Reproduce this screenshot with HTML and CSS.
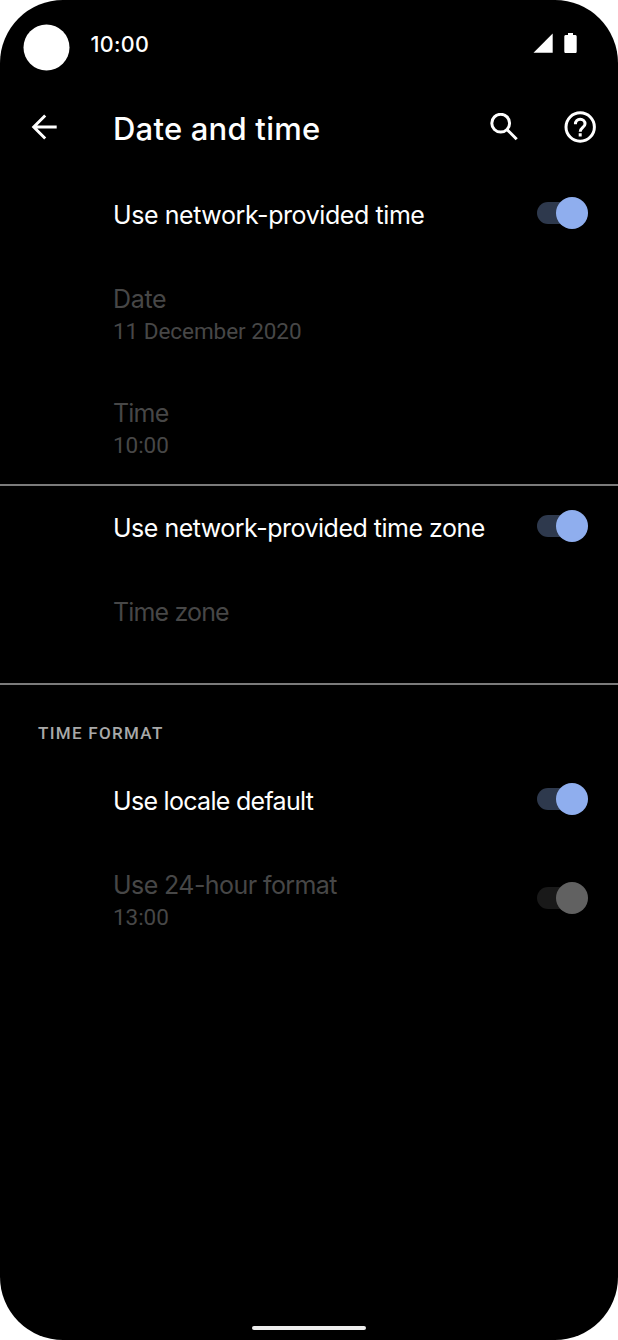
FILE: index.html
```html
<!DOCTYPE html>
<html lang="en">
<head>
<meta charset="utf-8">
<title>Date and time</title>
<link rel="stylesheet" href="styles.css">
</head>
<body>
<div class="phone">
  <header class="status">
    <svg class="camera" width="48" height="48" viewBox="0 0 48 48"><circle cx="23.500" cy="23.500" r="23" fill="#fff"/></svg>
    <span class="clock">10:00</span>
    <svg class="signal" width="20" height="20" viewBox="0 0 20 20"><path d="M0.500 19.700L19.700 0.500V19.700Z" fill="#fff"/></svg>
    <svg class="battery" width="13" height="21" viewBox="0 0 13 21"><path d="M4 0H9V2H11.500Q12.700 2 12.700 3.500V18.500Q12.700 20 11.500 20H1.500Q0.300 20 0.300 18.500V3.500Q0.300 2 1.500 2H4Z" fill="#fff"/></svg>
  </header>
  <nav class="appbar">
    <svg class="back" width="26" height="26" viewBox="0 0 26 26" fill="none" stroke="#fff" stroke-width="2.900"><path d="M25.700 13H3M14.200 1.500L2.700 13L14.200 24.500"/></svg>
    <h1 class="heading">Date and time</h1>
    <svg class="search" width="28" height="28" viewBox="0 0 28 28" fill="none" stroke="#fff" stroke-width="3"><circle cx="10.700" cy="10.200" r="8.900"/><path d="M16.900 16.400L26.700 26.200"/></svg>
    <svg class="help" width="32" height="32" viewBox="0 0 32 32" fill="none" stroke="#fff" stroke-width="3"><circle cx="16.200" cy="16" r="14.200"/><path d="M11.400 13.200C11.400 10.300 13.500 8.200 16.200 8.200S21 10.300 21 12.900C21 16.200 16.200 16.600 16.200 20.700M16.200 22.300V25.500"/></svg>
  </nav>
  <main>
    <section class="group">
      <div class="row"><div class="text"><div class="title t-network">Use network-provided time</div></div><span class="switch"></span></div>
      <div class="row off"><div class="text"><div class="title t-date">Date</div><div class="sub">11 December 2020</div></div></div>
      <div class="row off"><div class="text"><div class="title t-time">Time</div><div class="sub">10:00</div></div></div>
    </section>
    <section class="group zone">
      <div class="row"><div class="text"><div class="title t-network-zone">Use network-provided time zone</div></div><span class="switch"></span></div>
      <div class="row off"><div class="text"><div class="title t-zone">Time zone</div></div></div>
    </section>
    <section class="group format">
      <h2 class="label">TIME FORMAT</h2>
      <div class="row"><div class="text"><div class="title t-locale">Use locale default</div></div><span class="switch"></span></div>
      <div class="row off"><div class="text"><div class="title t-hour">Use 24-hour format</div><div class="sub">13:00</div></div><span class="switch"></span></div>
    </section>
  </main>
  <footer class="gesture"></footer>
</div>
</body>
</html>
```
FILE: styles.css
```css
* { box-sizing: border-box; }
body { margin: 0; background: #fff; }
.phone {
  width: 618px; height: 1340px; background: #000; color: #fff;
  border-radius: 63px; overflow: hidden;
  display: flex; flex-direction: column;
  font-family: Inter, Roboto, sans-serif;
}
.status { height: 90px; padding-left: 23px; display: flex; align-items: flex-start; flex: none; }
.camera { margin-top: 24px; }
.clock { width: 80px; margin: 30px 0 0 19.500px; font-size: 21.500px; line-height: 28px; letter-spacing: 0.300px; font-weight: 500; white-space: nowrap; }
.signal { margin: 33px 0 0 362.500px; }
.battery { margin: 33px 0 0 11px; }
.appbar { height: 82.500px; display: flex; align-items: flex-start; flex: none; padding-left: 31px; }
.back { margin-top: 24px; }
.heading { margin: 18px 0 0 56px; width: 376px; font-size: 31px; line-height: 42px; font-weight: 500; letter-spacing: 0.220px; white-space: nowrap; }
.search { margin-top: 23px; margin-left: 1px; }
.help { margin-top: 21px; margin-left: 46px; }
main { flex: 1; }
.row { display: flex; align-items: center; padding: 25px 30px 25px 113px; }
.text { flex: 1; }
.title { font-size: 25px; line-height: 34px; white-space: nowrap; }
.t-network { letter-spacing: -0.420px; }
.t-network-zone { letter-spacing: -0.500px; }
.t-date { letter-spacing: -0.300px; }
.t-time { letter-spacing: -0.800px; }
.t-zone { letter-spacing: -0.850px; }
.t-locale { letter-spacing: -0.700px; }
.t-hour { letter-spacing: -0.580px; }
.sub { font-family: Roboto, sans-serif; font-size: 22.500px; line-height: 30.500px; letter-spacing: -0.050px; white-space: nowrap; }
.off { color: #474747; }
.switch { flex: none; width: 51px; height: 32px; margin: -2px 0 1px; display: flex; align-items: center; }
.switch::before { content: ""; width: 30px; height: 22px; border-radius: 11px 0 0 11px; background: #2e394d; }
.switch::after { content: ""; flex: none; width: 32px; height: 32px; margin-left: -11px; border-radius: 50%; background: #8faeee; }
.off .switch::before { background: #191919; }
.off .switch::after { background: #616161; }
.zone, .format { border-top: 2px solid #7b7b7b; }
.zone { margin-top: -2px; height: 199px; }
.label { margin: 0; height: 74px; padding: 36.500px 0 0 38px; font-family: Roboto, sans-serif; font-size: 17px; line-height: 24px; font-weight: 500; letter-spacing: 1.300px; color: #a9a9a9; }
.gesture { flex: none; width: 114px; height: 4px; border-radius: 2px; background: #eee; margin: 0 0 10px 252px; }
```
